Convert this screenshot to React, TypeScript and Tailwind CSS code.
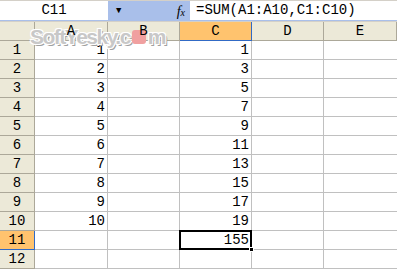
const cols = ['A', 'B', 'C', 'D', 'E'];

const rows: { a?: string; c?: string }[] = [
  { a: '1', c: '1' },
  { a: '2', c: '3' },
  { a: '3', c: '5' },
  { a: '4', c: '7' },
  { a: '5', c: '9' },
  { a: '6', c: '11' },
  { a: '7', c: '13' },
  { a: '8', c: '15' },
  { a: '9', c: '17' },
  { a: '10', c: '19' },
  { c: '155' },
  {},
];

const font = { fontFamily: '"Liberation Mono", "Noto Sans CJK SC", monospace' };

export default function App() {
  return (
    <div className="relative h-[270px] w-[397px] overflow-hidden bg-white text-[14px] text-black" style={font}>
      {/* formula bar */}
      <div className="flex h-[21px] border-t border-[#d4d0c8] bg-[#a9bfea]">
        <div className="flex h-[19px] w-[108px] items-center justify-center bg-white">C11</div>
        <div className="flex w-[82px] items-center pl-[8px]">
          <span className="text-[9px] leading-none">▼</span>
          <span className="ml-auto pr-[5px] text-[14px] italic" style={{ fontFamily: '"Liberation Serif", serif' }}>
            f<span className="text-[10px]">x</span>
          </span>
        </div>
        <div className="flex h-[19px] flex-1 items-center bg-white pl-[6px]">=SUM(A1:A10,C1:C10)</div>
      </div>
      <div className="h-[1px] bg-[#d4d0c8]" />

      {/* sheet */}
      <div className="grid grid-cols-[35px_73px_72px_72px_72px_73px] grid-rows-[19px_repeat(12,19px)]">
        <div className="border-r border-b border-[#aca899] bg-[#ece9d8]" />
        {cols.map((c) => (
          <div
            key={c}
            className={
              c === 'C'
                ? 'flex items-center justify-center border-r border-b border-[#316ac5] bg-[#ffc36e]'
                : 'flex items-center justify-center border-r border-b border-[#aca899] bg-[#ece9d8]'
            }
          >
            <span className="relative z-10">{c}</span>
          </div>
        ))}
        {rows.map((r, i) => {
          const n = i + 1;
          const sel = n === 11;
          return [
            <div
              key={`h${n}`}
              className={
                sel
                  ? 'flex items-center justify-center border-r border-b border-[#316ac5] bg-[#ffc36e]'
                  : 'flex items-center justify-center border-r border-b border-[#aca899] bg-[#ece9d8]'
              }
            >
              {n}
            </div>,
            <div key={`a${n}`} className="flex items-center justify-end border-r border-b border-[#c0c0c0] pr-[2px]">
              {r.a}
            </div>,
            <div key={`b${n}`} className="border-r border-b border-[#c0c0c0]" />,
            <div
              key={`c${n}`}
              className={
                sel
                  ? 'relative -mt-[1px] -ml-[1px] flex h-[20px] items-center justify-end border-[2px] border-black pr-[1px] text-[14px]'
                  : 'flex items-center justify-end border-r border-b border-[#c0c0c0] pr-[2px]'
              }
            >
              {r.c}
              {sel && <span className="absolute -right-[4px] -bottom-[4px] h-[5px] w-[5px] border border-white bg-black" />}
            </div>,
            <div key={`d${n}`} className="border-r border-b border-[#c0c0c0]" />,
            <div key={`e${n}`} className="border-b border-[#c0c0c0]" />,
          ];
        })}
      </div>

      {/* watermark */}
      <div
        className="pointer-events-none absolute top-[21px] left-[30px] flex items-center text-[21px] font-bold tracking-[-1.5px] text-[#c8c8c8]"
        style={{
          fontFamily: '"Liberation Sans", Arial, sans-serif',
          textShadow: '1px 1px 0 #fff, -1px -1px 0 #fff, 1px -1px 0 #fff, -1px 1px 0 #fff, 2px 2px 0 #a0a0a0',
        }}
      >
        SoftYesky.c
        <span className="mx-[2px] inline-block h-[14px] w-[14px] rounded-[3px] bg-[#f0a0a0]" />
        m
      </div>
    </div>
  );
}
